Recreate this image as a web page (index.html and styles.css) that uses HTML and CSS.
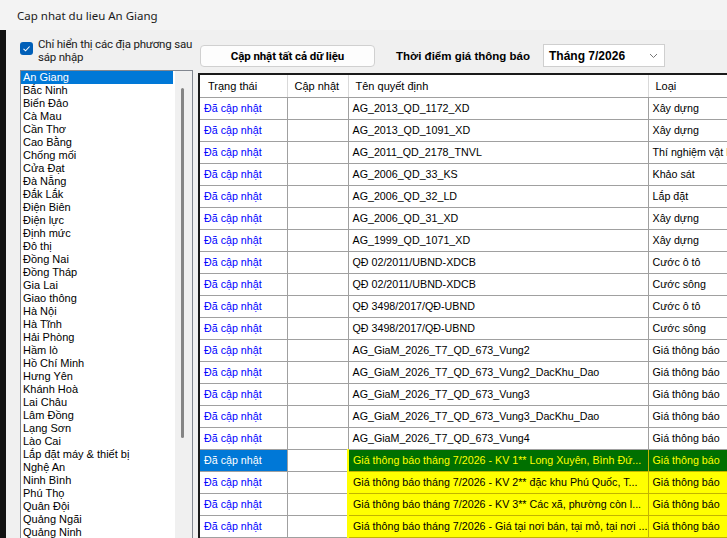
FILE: index.html
```html
<!doctype html>
<html>
  <head>
    <meta charset="utf-8">
    <title>Cap nhat du lieu An Giang</title>
    <link rel="stylesheet" href="styles.css">
  </head>
  <body>
    <div class="titlebar">Cap nhat du lieu An Giang</div>
    <div class="main">
      <div class="edge"></div>
      <div class="left">
        <label class="check">
          <span class="box">
            <svg width="13" height="13" viewBox="0 0 13 13"><polyline points="3.5,6.8 5.6,8.8 9.6,4.5" fill="none" stroke="#fff" stroke-width="1.1"/></svg>
          </span>
          <span class="check-text">Chỉ hiển thị các địa phương sau sáp nhập</span>
        </label>
        <div class="listbox">
          <ul class="items">
            <li class="sel">An Giang</li>
            <li>Bắc Ninh</li>
            <li>Biển Đảo</li>
            <li>Cà Mau</li>
            <li>Cần Thơ</li>
            <li>Cao Bằng</li>
            <li>Chống mối</li>
            <li>Cửa Đạt</li>
            <li>Đà Nẵng</li>
            <li>Đắk Lắk</li>
            <li>Điện Biên</li>
            <li>Điện lực</li>
            <li>Định mức</li>
            <li>Đô thị</li>
            <li>Đồng Nai</li>
            <li>Đồng Tháp</li>
            <li>Gia Lai</li>
            <li>Giao thông</li>
            <li>Hà Nội</li>
            <li>Hà Tĩnh</li>
            <li>Hải Phòng</li>
            <li>Hầm lò</li>
            <li>Hồ Chí Minh</li>
            <li>Hưng Yên</li>
            <li>Khánh Hoà</li>
            <li>Lai Châu</li>
            <li>Lâm Đồng</li>
            <li>Lạng Sơn</li>
            <li>Lào Cai</li>
            <li>Lắp đặt máy &amp; thiết bị</li>
            <li>Nghệ An</li>
            <li>Ninh Bình</li>
            <li>Phú Thọ</li>
            <li>Quân Đội</li>
            <li>Quảng Ngãi</li>
            <li>Quảng Ninh</li>
          </ul>
          <div class="vscroll"><div class="thumb"></div></div>
        </div>
      </div>
      <div class="right">
        <div class="toolbar">
          <button class="btn">Cập nhật tất cả dữ liệu</button>
          <span class="lbl">Thời điểm giá thông báo</span>
          <div class="combo">
            <span>Tháng 7/2026</span>
            <svg width="9" height="6" viewBox="0 0 9 6"><polyline points="1,1 4.5,4.5 8,1" fill="none" stroke="#777" stroke-width="1"/></svg>
          </div>
        </div>
        <div class="grid">
          <table>
            <colgroup>
              <col style="width:87px">
              <col style="width:61px">
              <col style="width:300px">
              <col style="width:110px">
            </colgroup>
            <thead>
              <tr><th>Trạng thái</th><th>Cập nhật</th><th>Tên quyết định</th><th>Loại</th></tr>
            </thead>
            <tbody>
              <tr><td class="st">Đã cập nhật</td><td></td><td>AG_2013_QD_1172_XD</td><td>Xây dựng</td></tr>
              <tr><td class="st">Đã cập nhật</td><td></td><td>AG_2013_QD_1091_XD</td><td>Xây dựng</td></tr>
              <tr><td class="st">Đã cập nhật</td><td></td><td>AG_2011_QD_2178_TNVL</td><td>Thí nghiệm vật liệu</td></tr>
              <tr><td class="st">Đã cập nhật</td><td></td><td>AG_2006_QD_33_KS</td><td>Khảo sát</td></tr>
              <tr><td class="st">Đã cập nhật</td><td></td><td>AG_2006_QD_32_LD</td><td>Lắp đặt</td></tr>
              <tr><td class="st">Đã cập nhật</td><td></td><td>AG_2006_QD_31_XD</td><td>Xây dựng</td></tr>
              <tr><td class="st">Đã cập nhật</td><td></td><td>AG_1999_QD_1071_XD</td><td>Xây dựng</td></tr>
              <tr><td class="st">Đã cập nhật</td><td></td><td>QĐ 02/2011/UBND-XDCB</td><td>Cước ô tô</td></tr>
              <tr><td class="st">Đã cập nhật</td><td></td><td>QĐ 02/2011/UBND-XDCB</td><td>Cước sông</td></tr>
              <tr><td class="st">Đã cập nhật</td><td></td><td>QĐ 3498/2017/QĐ-UBND</td><td>Cước ô tô</td></tr>
              <tr><td class="st">Đã cập nhật</td><td></td><td>QĐ 3498/2017/QĐ-UBND</td><td>Cước sông</td></tr>
              <tr><td class="st">Đã cập nhật</td><td></td><td>AG_GiaM_2026_T7_QD_673_Vung2</td><td>Giá thông báo</td></tr>
              <tr><td class="st">Đã cập nhật</td><td></td><td>AG_GiaM_2026_T7_QD_673_Vung2_DacKhu_Dao</td><td>Giá thông báo</td></tr>
              <tr><td class="st">Đã cập nhật</td><td></td><td>AG_GiaM_2026_T7_QD_673_Vung3</td><td>Giá thông báo</td></tr>
              <tr><td class="st">Đã cập nhật</td><td></td><td>AG_GiaM_2026_T7_QD_673_Vung3_DacKhu_Dao</td><td>Giá thông báo</td></tr>
              <tr><td class="st">Đã cập nhật</td><td></td><td>AG_GiaM_2026_T7_QD_673_Vung4</td><td>Giá thông báo</td></tr>
              <tr class="current"><td class="st">Đã cập nhật</td><td></td><td class="hl">Giá thông báo tháng 7/2026 - KV 1** Long Xuyên, Bình Đứ...</td><td class="hl">Giá thông báo</td></tr>
              <tr><td class="st">Đã cập nhật</td><td></td><td class="hl">Giá thông báo tháng 7/2026 - KV 2** đặc khu Phú Quốc, T...</td><td class="hl">Giá thông báo</td></tr>
              <tr><td class="st">Đã cập nhật</td><td></td><td class="hl">Giá thông báo tháng 7/2026 - KV 3** Các xã, phường còn l...</td><td class="hl">Giá thông báo</td></tr>
              <tr><td class="st">Đã cập nhật</td><td></td><td class="hl">Giá thông báo tháng 7/2026 - Giá tại nơi bán, tại mỏ, tại nơi ...</td><td class="hl">Giá thông báo</td></tr>
              <tr class="tail"><td></td><td></td><td class="hl"></td><td class="hl"></td></tr>
            </tbody>
          </table>
        </div>
      </div>
    </div>
  </body>
</html>
```

FILE: styles.css
```css
html, body {
	margin: 0;
	padding: 0;
}
body {
	width: 727px;
	height: 538px;
	overflow: hidden;
	background: #f0f0f0;
	font-family: "Liberation Sans", Arial, sans-serif;
	font-size: 11px;
	color: #000;
}
.titlebar {
	height: 30px;
	line-height: 32px;
	padding-left: 17px;
	background: #f3f3f3;
	font-family: "Noto Sans", sans-serif;
	font-size: 11.5px;
	color: #1a1a1a;
}
.main {
	display: flex;
	height: 508px;
}
.edge {
	width: 6px;
	background: #111;
}
.left {
	width: 192px;
	padding-left: 14px;
	box-sizing: border-box;
}
.check {
	display: flex;
	align-items: flex-start;
	margin-top: 8px;
	height: 32px;
}
.check .box {
	display: block;
	width: 13px;
	height: 13px;
	margin: 4px 5px 0 0;
	border-radius: 3px;
	background: #005fb8;
}
.check .box svg {
	display: block;
}
.check-text {
	font-family: Roboto, sans-serif;
	font-size: 11.5px;
	letter-spacing: -0.2px;
	line-height: 13px;
	width: 160px;
	color: #1a1a1a;
}
.listbox {
	position: relative;
	width: 173px;
	height: 480px;
	background: #fff;
	border: 1px solid #828790;
	overflow: hidden;
	box-sizing: border-box;
}
.items {
	list-style: none;
	margin: 0;
	padding: 0;
	width: 152px;
}
.items li {
	height: 13px;
	line-height: 13px;
	padding-left: 2px;
	white-space: nowrap;
}
.items li.sel {
	background: #0078d7;
	color: #fff;
}
.vscroll {
	position: absolute;
	top: 0;
	right: 0;
	width: 17px;
	height: 100%;
	background: #f0f0f0;
}
.vscroll .thumb {
	margin: 17px 0 0 6px;
	width: 3px;
	height: 350px;
	border-radius: 2px;
	background: #858585;
}
.right {
	flex: 1;
	min-width: 0;
}
.toolbar {
	display: flex;
	align-items: center;
	height: 23px;
	margin: 14px 0 6px 2px;
}
.btn {
	width: 175px;
	height: 22px;
	padding: 0;
	background: #fdfdfd;
	border: 1px solid #d0d0d0;
	border-radius: 4px;
	font-family: Roboto, sans-serif;
	font-weight: bold;
	font-size: 11.5px;
	letter-spacing: -0.1px;
	color: #000;
}
.lbl {
	margin-left: 21px;
	font-weight: bold;
	font-size: 11.5px;
}
.combo {
	display: flex;
	align-items: center;
	justify-content: space-between;
	margin-left: 13px;
	width: 122px;
	height: 23px;
	padding: 0 6px 0 5px;
	background: #fff;
	border: 1px solid #cfcfcf;
	box-sizing: border-box;
	font-weight: bold;
	font-size: 12px;
}
.grid {
	border-top: 2px solid #1a1a1a;
	border-left: 2px solid #1a1a1a;
	background: #fff;
	height: 470px;
	overflow: hidden;
}
.grid table {
	border-collapse: collapse;
	table-layout: fixed;
	width: 558px;
}
.grid th, .grid td {
	height: 22px;
	padding: 0 0 0 4px;
	text-align: left;
	white-space: nowrap;
	overflow: hidden;
	border-right: 1px solid #a0a0a0;
	border-bottom: 1px solid #a0a0a0;
	box-sizing: border-box;
	font-size: 10.7px;
}
.grid th {
	font-weight: normal;
	padding-left: 7px;
	border-right-color: #d9d9d9;
	font-size: 11px;
}
.grid th:first-child {
	padding-left: 8px;
}
.grid td.st {
	color: #0000ff;
}
.grid td.hl {
	background: #ffff00;
	border-bottom-color: #c2b400;
	border-right-color: #c2b400;
}
.grid tr td:nth-child(3).hl {
	border-left: 2px solid #ffff00;
}
.grid tr.current td.st {
	background: #0078d7;
	color: #fff;
}
.grid tr.current td.hl {
	background: #007000;
	color: #ffff00;
}
```
